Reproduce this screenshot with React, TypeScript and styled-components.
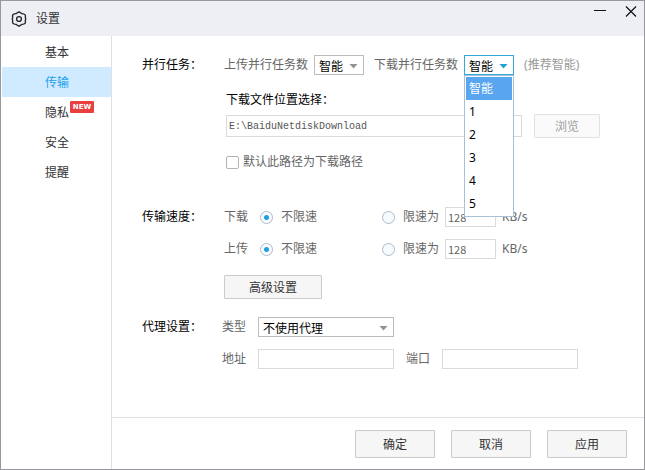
import React, { useState } from "react";
import styled, { createGlobalStyle } from "styled-components";

const GlobalStyle = createGlobalStyle`
  * { box-sizing: border-box; }
  body { margin: 0; background: #fff; }
  body, button, input, select {
    font-family: "Noto Sans", "Noto Sans CJK SC", sans-serif;
    font-size: 12px;
  }
`;

const Window = styled.div`
  display: flex;
  flex-direction: column;
  min-height: 100vh;
  border: 1px solid #98989c;
  background: #fff;
  color: #666;
  line-height: 20px;
`;

const TitleBar = styled.header`
  display: flex;
  align-items: center;
  height: 35px;
  padding: 0 7px 0 10px;
  background: #eeeff5;
`;

const Title = styled.h1`
  flex: 1;
  margin: 0 0 0 9px;
  font-size: 12px;
  font-weight: 400;
  color: #333;
`;

const WindowButtons = styled.div`
  display: flex;
  align-self: flex-start;
  gap: 19px;
`;

const WindowButton = styled.button`
  display: flex;
  align-items: center;
  justify-content: center;
  width: 12px;
  height: 20px;
  padding: 0;
  border: 0;
  background: none;
`;

const Body = styled.div`
  display: flex;
  flex: 1;
`;

const Sidebar = styled.nav`
  width: 111px;
  padding: 1px 0 0 1px;
  border-right: 1px solid #e0e0e4;
`;

const NavItem = styled.button<{ $active?: boolean }>`
  display: block;
  width: 100%;
  height: 30px;
  padding: 0 0 0 43px;
  border: 0;
  text-align: left;
  background: ${(p) => (p.$active ? "#d0ebff" : "transparent")};
  color: ${(p) => (p.$active ? "#1ba0f0" : "#333")};
`;

const NavLabel = styled.span`
  position: relative;
`;

const Badge = styled.span`
  position: absolute;
  left: 25px;
  top: -3px;
  width: 24px;
  height: 12px;
  border-radius: 1px;
  background: #e9403f;
  color: #fff;
  font: 700 7px/12px "DejaVu Sans", sans-serif;
  text-align: center;
`;

const Main = styled.main`
  display: flex;
  flex: 1;
  flex-direction: column;
  min-width: 0;
`;

const Form = styled.form`
  flex: 1;
  padding: 19px 44px 16px 30px;
`;

const Section = styled.section<{ $label: number; $top?: number }>`
  display: grid;
  grid-template-columns: ${(p) => p.$label}px minmax(0, 1fr);
  margin-top: ${(p) => p.$top ?? 0}px;
`;

const SectionTitle = styled.h2`
  margin: 0;
  font-size: 12px;
  font-weight: 400;
  line-height: 20px;
  color: #000;
`;

const Rows = styled.div`
  display: flex;
  flex-direction: column;
  gap: 12px;
`;

const Row = styled.div<{ $gap?: number }>`
  display: flex;
  align-items: center;
  gap: ${(p) => p.$gap ?? 12}px;
  white-space: nowrap;
`;

const Field = styled.div`
  display: flex;
  align-items: center;
  gap: 6px;
`;

const Hint = styled.span`
  color: #999;
`;

const SelectBox = styled.div<{ $width: number }>`
  position: relative;
  width: ${(p) => p.$width}px;
  height: 20px;
`;

const Select = styled.select<{ $open?: boolean }>`
  display: block;
  appearance: none;
  width: 100%;
  height: 20px;
  padding: 2px 16px 0 4px;
  border: 1px solid ${(p) => (p.$open ? "#35a6d6" : "#bcbcc0")};
  border-radius: 0;
  outline: 0;
  background: #fff;
  color: #000;
`;

const Arrow = styled.svg`
  position: absolute;
  right: 6px;
  top: 9px;
  pointer-events: none;
`;

const OptionList = styled.ul`
  position: absolute;
  z-index: 1;
  left: 0;
  top: 20px;
  width: 100%;
  margin: 0;
  padding: 1px;
  list-style: none;
  border: 1px solid #a9c0d8;
  background: #fff;
`;

const Option = styled.li<{ $selected: boolean }>`
  height: 23px;
  padding-left: 3px;
  line-height: 23px;
  background: ${(p) => (p.$selected ? "#5aa5f0" : "#fff")};
  color: ${(p) => (p.$selected ? "#fff" : "#000")};
`;

const PathBlock = styled.div`
  padding-left: 2px;
`;

const PathTitle = styled.label`
  display: block;
  margin-top: 15px;
  color: #000;
`;

const PathRow = styled(Row)`
  margin: 4px 0 14px;
`;

const TextInput = styled.input<{ $width?: number; $height?: number }>`
  flex: ${(p) => (p.$width ? "none" : "1")};
  width: ${(p) => (p.$width ? `${p.$width}px` : "auto")};
  min-width: 0;
  height: ${(p) => p.$height ?? 20}px;
  padding: 0 2px;
  border: 1px solid #dadade;
  outline: 0;
  background: #fff;
  color: #555;
  font-family: "Liberation Mono", monospace;
  font-size: 10px;
`;

const SpeedInput = styled(TextInput)`
  font-family: "Noto Sans CJK SC", sans-serif;
  font-size: 11px;
  color: #666;
`;

const Button = styled.button<{ $width: number; $height?: number }>`
  width: ${(p) => p.$width}px;
  height: ${(p) => p.$height ?? 24}px;
  padding: 0;
  border: 1px solid #cbcbcd;
  border-radius: 1px;
  background: #f6f6f7;
  color: #333;
  &:disabled {
    border-color: #e2e2e4;
    background: #fafafa;
    color: #a0a0a0;
  }
`;

const CheckLabel = styled.label`
  display: flex;
  align-items: center;
  gap: 4px;
`;

const Checkbox = styled.input`
  appearance: none;
  width: 13px;
  height: 13px;
  margin: 0;
  border: 1px solid #b4b4b8;
  border-radius: 2px;
  background: #fff;
  &:checked { background: #1b9fe8; }
`;

const SpeedRow = styled.div`
  display: grid;
  grid-template-columns: 36px 122px auto 1fr;
  align-items: center;
  height: 20px;
  white-space: nowrap;
`;

const RadioLabel = styled.label`
  display: flex;
  align-items: center;
  gap: 8px;
`;

const Radio = styled.input`
  appearance: none;
  width: 13px;
  height: 13px;
  margin: 0;
  border: 1px solid #a9bccb;
  border-radius: 50%;
  background: #f8fbfd;
  &:checked {
    background: radial-gradient(circle, #1b9fe8 2px, #fafdff 3px);
  }
`;

const Limit = styled.div`
  display: flex;
  align-items: center;
  gap: 6px;
`;

const AdvancedRow = styled.div`
  display: flex;
  margin-top: 4px;
`;

const Footer = styled.footer`
  display: flex;
  justify-content: flex-end;
  gap: 16px;
  padding: 12px 17px 11px;
  border-top: 1px solid #e0e0e4;
`;

const DownArrow = ({ color }: { color: string }) => (
  <Arrow width="9" height="5" viewBox="0 0 9 5" aria-hidden="true">
    <path d="M0.5 0h8l-4 4.5z" fill={color} />
  </Arrow>
);

const GearIcon = () => (
  <svg width="16" height="16" viewBox="0 0 16 16" fill="none" stroke="#292a30" strokeWidth="1.4" strokeLinejoin="round" aria-hidden="true">
    <path d="M6.4 1.8Q8 .4 9.6 1.8Q10.7 2.9 12.4 2.9Q14.6 3.2 14.5 5.2Q14 6.7 14.8 8Q14 9.3 14.5 10.8Q14.6 12.8 12.4 13.1Q10.7 13.1 9.6 14.2Q8 15.6 6.4 14.2Q5.3 13.1 3.6 13.1Q1.4 12.8 1.5 10.8Q2 9.3 1.2 8Q2 6.7 1.5 5.2Q1.4 3.2 3.6 2.9Q5.3 2.9 6.4 1.8Z" />
    <circle cx="8" cy="8" r="2.4" />
  </svg>
);

const navItems = ["基本", "传输", "隐私", "安全", "提醒"];
const taskOptions = ["智能", "1", "2", "3", "4", "5"];

function DownloadTasks() {
  const [open, setOpen] = useState(true);
  const [value, setValue] = useState("智能");
  return (
    <SelectBox $width={50}>
      <Select
        id="download-tasks"
        $open={open}
        value={value}
        onChange={(e) => setValue(e.target.value)}
        onMouseDown={(e) => {
          e.preventDefault();
          setOpen(!open);
        }}
      >
        {taskOptions.map((o) => <option key={o}>{o}</option>)}
      </Select>
      <DownArrow color="#22a0d4" />
      {open && (
        <OptionList role="listbox" aria-label="下载并行任务数">
          {taskOptions.map((o) => (
            <Option
              key={o}
              role="option"
              aria-selected={o === value}
              $selected={o === value}
              onClick={() => {
                setValue(o);
                setOpen(false);
              }}
            >
              {o}
            </Option>
          ))}
        </OptionList>
      )}
    </SelectBox>
  );
}

function SpeedLimit({ name, label }: { name: string; label: string }) {
  return (
    <SpeedRow role="radiogroup" aria-label={label}>
      <span>{label}</span>
      <RadioLabel>
        <Radio type="radio" name={name} defaultChecked />
        不限速
      </RadioLabel>
      <Limit>
        <RadioLabel>
          <Radio type="radio" name={name} />
          限速为
        </RadioLabel>
        <SpeedInput $width={51} aria-label={`${label}限速`} defaultValue="128" />
        <span>KB/s</span>
      </Limit>
    </SpeedRow>
  );
}

export default function App() {
  const [active, setActive] = useState("传输");
  return (
    <>
      <GlobalStyle />
      <Window>
        <TitleBar>
          <GearIcon />
          <Title>设置</Title>
          <WindowButtons>
            <WindowButton aria-label="最小化">
              <svg width="12" height="12" viewBox="0 0 12 12" stroke="#111" strokeWidth="1">
                <path d="M0 5.5h12" />
              </svg>
            </WindowButton>
            <WindowButton aria-label="关闭">
              <svg width="12" height="12" viewBox="0 0 12 12" stroke="#111" strokeWidth="1.2">
                <path d="M1 1.5l10 10M11 1.5l-10 10" />
              </svg>
            </WindowButton>
          </WindowButtons>
        </TitleBar>
        <Body>
          <Sidebar>
            {navItems.map((item) => (
              <NavItem key={item} $active={item === active} onClick={() => setActive(item)}>
                <NavLabel>
                  {item}
                  {item === "隐私" && <Badge>NEW</Badge>}
                </NavLabel>
              </NavItem>
            ))}
          </Sidebar>
          <Main>
            <Form id="settings" onSubmit={(e) => e.preventDefault()}>
              <Section $label={82}>
                <SectionTitle>并行任务：</SectionTitle>
                <div>
                  <Row $gap={10}>
                    <Field>
                      <label htmlFor="upload-tasks">上传并行任务数</label>
                      <SelectBox $width={50}>
                        <Select id="upload-tasks" defaultValue="智能">
                          {taskOptions.map((o) => <option key={o}>{o}</option>)}
                        </Select>
                        <DownArrow color="#929292" />
                      </SelectBox>
                    </Field>
                    <Field>
                      <label htmlFor="download-tasks">下载并行任务数</label>
                      <DownloadTasks />
                    </Field>
                    <Hint>(推荐智能)</Hint>
                  </Row>
                  <PathBlock>
                    <PathTitle htmlFor="path">下载文件位置选择：</PathTitle>
                    <PathRow>
                      <TextInput id="path" $height={22} defaultValue="E:\BaiduNetdiskDownload" />
                      <Button type="button" $width={66} disabled>浏览</Button>
                    </PathRow>
                    <CheckLabel>
                      <Checkbox type="checkbox" />
                      默认此路径为下载路径
                    </CheckLabel>
                  </PathBlock>
                </div>
              </Section>
              <Section $label={82} $top={35}>
                <SectionTitle>传输速度：</SectionTitle>
                <Rows>
                  <SpeedLimit name="download-speed" label="下载" />
                  <SpeedLimit name="upload-speed" label="上传" />
                  <AdvancedRow>
                    <Button type="button" $width={98}>高级设置</Button>
                  </AdvancedRow>
                </Rows>
              </Section>
              <Section $label={80} $top={18}>
                <SectionTitle>代理设置：</SectionTitle>
                <Rows>
                  <Row>
                    <label htmlFor="proxy-type">类型</label>
                    <SelectBox $width={136}>
                      <Select id="proxy-type">
                        <option>不使用代理</option>
                      </Select>
                      <DownArrow color="#929292" />
                    </SelectBox>
                  </Row>
                  <Row>
                    <label htmlFor="proxy-host">地址</label>
                    <TextInput id="proxy-host" $width={136} />
                    <label htmlFor="proxy-port">端口</label>
                    <TextInput id="proxy-port" $width={136} />
                  </Row>
                </Rows>
              </Section>
            </Form>
            <Footer>
              <Button type="submit" form="settings" $width={80} $height={28}>确定</Button>
              <Button type="button" $width={80} $height={28}>取消</Button>
              <Button type="button" $width={80} $height={28}>应用</Button>
            </Footer>
          </Main>
        </Body>
      </Window>
    </>
  );
}
